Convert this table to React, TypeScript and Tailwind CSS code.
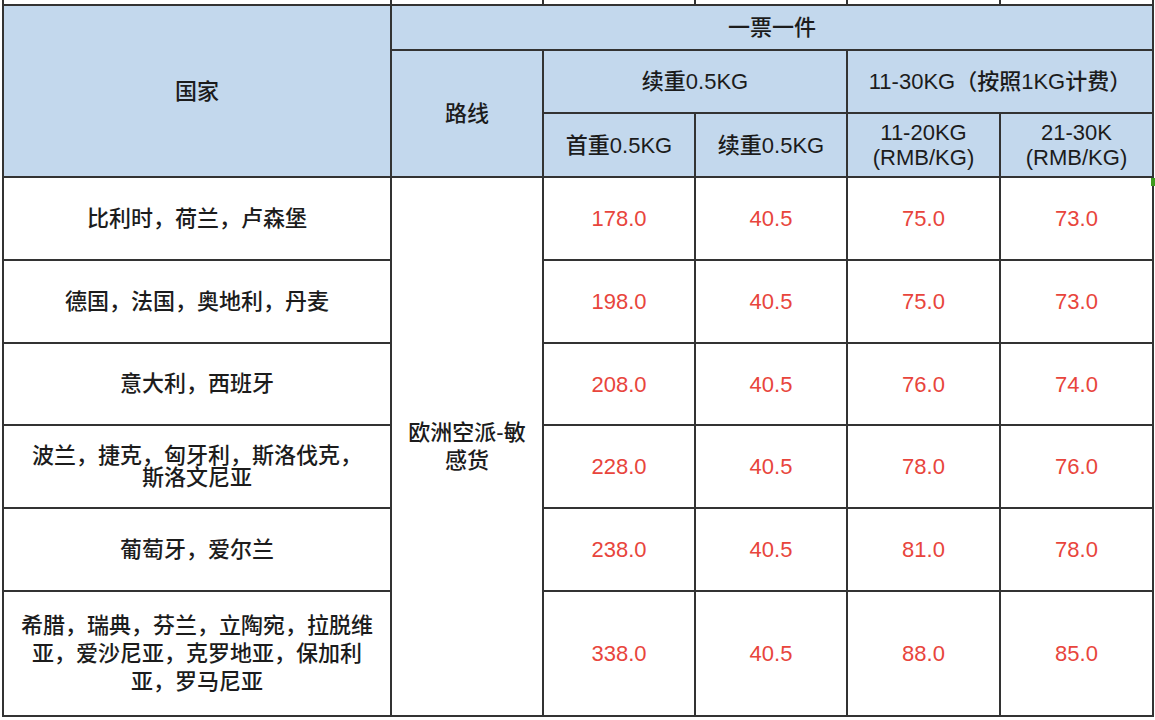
const font = {
  fontFamily: '"Liberation Sans", "Noto Sans CJK SC", sans-serif',
};

type PriceRow = {
  countries: string[];
  first: string;
  extra: string;
  tier1: string;
  tier2: string;
  height: string;
  tight?: boolean;
};

const rows: PriceRow[] = [
  { countries: ["比利时，荷兰，卢森堡"], first: "178.0", extra: "40.5", tier1: "75.0", tier2: "73.0", height: "h-[83px]" },
  { countries: ["德国，法国，奥地利，丹麦"], first: "198.0", extra: "40.5", tier1: "75.0", tier2: "73.0", height: "h-[83px]" },
  { countries: ["意大利，西班牙"], first: "208.0", extra: "40.5", tier1: "76.0", tier2: "74.0", height: "h-[82px]" },
  {
    countries: ["波兰，捷克，匈牙利，斯洛伐克，", "斯洛文尼亚"],
    first: "228.0",
    extra: "40.5",
    tier1: "78.0",
    tier2: "76.0",
    height: "h-[83px]",
    tight: true,
  },
  { countries: ["葡萄牙，爱尔兰"], first: "238.0", extra: "40.5", tier1: "81.0", tier2: "78.0", height: "h-[83px]" },
  {
    countries: ["希腊，瑞典，芬兰，立陶宛，拉脱维", "亚，爱沙尼亚，克罗地亚，保加利", "亚，罗马尼亚"],
    first: "338.0",
    extra: "40.5",
    tier1: "88.0",
    tier2: "85.0",
    height: "h-[125px]",
  },
];

const cell = "border-2 border-[#333333] text-center align-middle p-0";
const head = `${cell} bg-[#c3d8ed] text-[#1c1c1c]`;
const price = `${cell} text-[#e8453c]`;

export default function App() {
  return (
    <div
      className="relative min-h-[720px] w-[1155px] bg-white pl-[2px] text-[22px] font-medium leading-[27px]"
      style={font}
    >
      <table className="table-fixed border-collapse" style={{ width: 1150 }}>
        <colgroup>
          <col className="w-[388px]" />
          <col className="w-[152px]" />
          <col className="w-[152px]" />
          <col className="w-[152px]" />
          <col className="w-[153px]" />
          <col className="w-[153px]" />
        </colgroup>
        <tbody>
          <tr className="h-[5px]">
            {[0, 1, 2, 3, 4, 5].map((i) => (
              <td key={i} className="border-x-2 border-[#333333] p-0" />
            ))}
          </tr>
          <tr className="h-[45px]">
            <td rowSpan={3} className={head}>国家</td>
            <td colSpan={5} className={head}>一票一件</td>
          </tr>
          <tr className="h-[63px]">
            <td rowSpan={2} className={head}>路线</td>
            <td colSpan={2} className={head}>续重0.5KG</td>
            <td colSpan={2} className={head}>11-30KG（按照1KG计费）</td>
          </tr>
          <tr className="h-[64px]">
            <td className={head}>首重0.5KG</td>
            <td className={head}>续重0.5KG</td>
            <td className={`${head} leading-[25px]`}>
              11-20KG
              <br />
              (RMB/KG)
            </td>
            <td className={`${head} leading-[25px]`}>
              21-30K
              <br />
              (RMB/KG)
            </td>
          </tr>
          {rows.map((row, i) => (
            <tr key={row.first} className={row.height}>
              <td className={`${cell} text-[#1c1c1c] ${row.tight ? "leading-[22px]" : "leading-[28px]"}`}>
                {row.countries.map((line, j) => (
                  <div key={j}>{line}</div>
                ))}
              </td>
              {i === 0 && (
                <td rowSpan={6} className={`${cell} text-[#1c1c1c] leading-[28px]`}>
                  欧洲空派-敏
                  <br />
                  感货
                </td>
              )}
              <td className={price}>{row.first}</td>
              <td className={price}>{row.extra}</td>
              <td className={price}>{row.tier1}</td>
              <td className={price}>{row.tier2}</td>
            </tr>
          ))}
        </tbody>
      </table>
      <div className="absolute left-[1151px] top-[178px] h-[8px] w-[4px] bg-[#3f9b1f]" />
    </div>
  );
}
